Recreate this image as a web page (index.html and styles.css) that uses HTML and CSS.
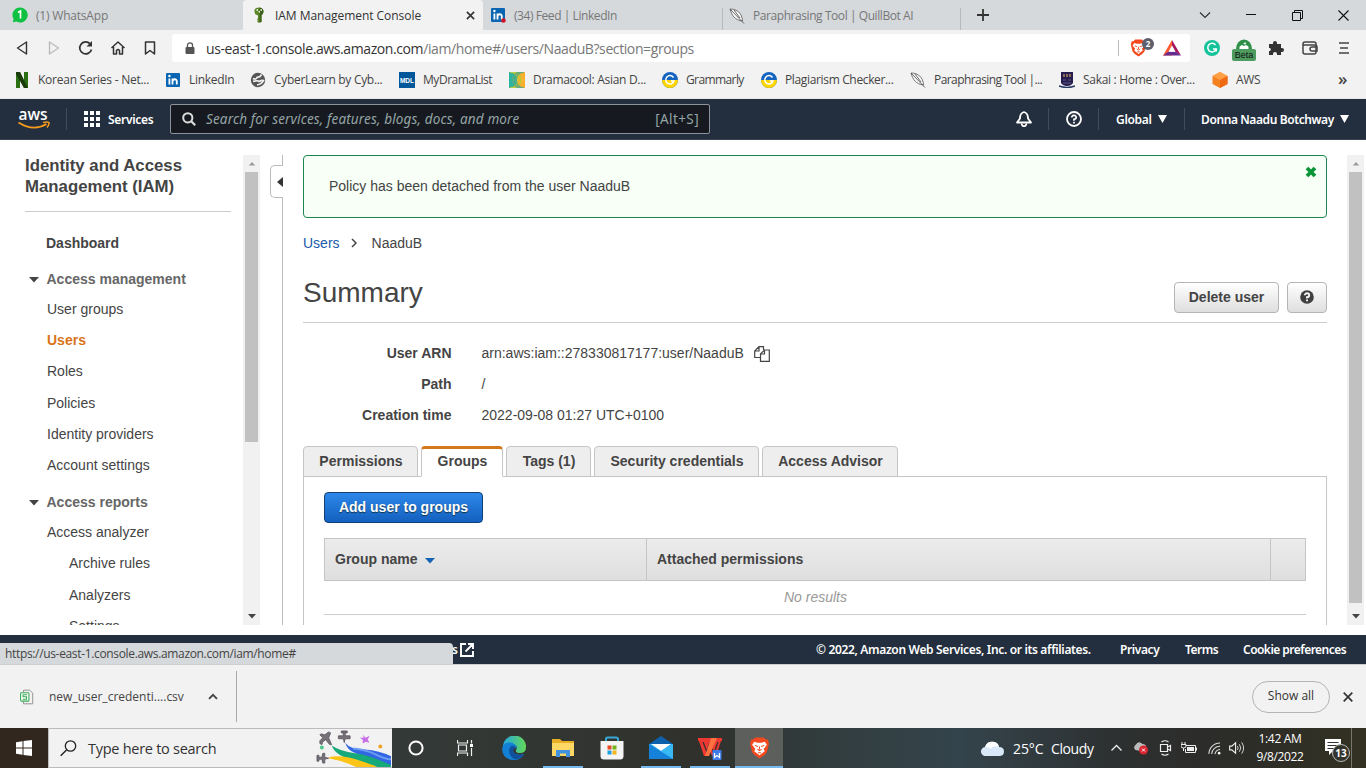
FILE: index.html
```
<!DOCTYPE html>
<html lang="en">
<head>
<meta charset="utf-8">
<title>IAM Management Console</title>
<link rel="stylesheet" href="styles.css">
</head>
<body>
<svg class="defs" width="0" height="0">
  <symbol id="quill" viewBox="0 0 16 16"><path d="M1 1C8 1 13 5 13.500 13C6 12 3 8 1 1Z" fill="#fafafa" stroke="#666" stroke-width=".9"/><path d="M1 1L15 15.500M5 2L11 10" fill="none" stroke="#555" stroke-width=".9"/></symbol>
  <symbol id="grammarly" viewBox="0 0 16 16"><circle cx="8" cy="8" r="8" fill="#1565c0"/><path d="M0 8a8 8 0 0 0 16 0z" fill="#ffd600"/><path d="M11.500 5.500A4.200 4.200 0 1 0 12 9H9" fill="none" stroke="#fff" stroke-width="1.500"/></symbol>
  <symbol id="linkedin" viewBox="0 0 16 16"><rect x="1" y="1" width="14" height="14" rx="1" fill="#0a66b2"/><path d="M4.400 6.500V12.500M7.500 12.500V6.500M7.500 9.500C7.500 6.800 11.800 6.300 11.800 9.300V12.500" fill="none" stroke="#fff" stroke-width="1.800"/><circle cx="4.400" cy="4" r="1.200" fill="#fff"/></symbol>
  <symbol id="brave" viewBox="0 0 20 22"><path d="M6 1H14L16 3L18 3L19 7L17 15Q15 18 10 21Q5 18 3 15L1 7L2 3L4 3Z" fill="#f4481e"/><path d="M5 5L8 6H12L15 5L17 8L14 12L15 14L10 18L5 14L6 12L3 8Z" fill="#fff"/><path d="M5.500 8.500L8.500 9.500M14.500 8.500L11.500 9.500M10 9.500V12.500M8 12L10 13.500L12 12M8.500 15.500H11.500" fill="none" stroke="#f4481e" stroke-width="1"/></symbol>
  <symbol id="up" viewBox="0 0 10 6"><path d="M1 5.500L5 1L9 5.500Z"/></symbol>
  <symbol id="down" viewBox="0 0 10 6"><path d="M0 0H10L5 5.500Z"/></symbol>
</svg>

<div class="tabstrip">
  <div class="tab tab-first"><svg class="fav" viewBox="0 0 16 16"><path d="M8 0.500A7.500 7.500 0 1 1 4.500 14.500L0.800 15.200L1.600 12A7.500 7.500 0 0 1 8 0.500Z" fill="#0fc143"/><path d="M6 5.500L8.500 4V11.500" fill="none" stroke="#fff" stroke-width="1.600"/></svg><span class="t-wa">(1) WhatsApp</span></div>
  <div class="tab tab-active"><svg class="fav" viewBox="0 0 16 16"><path d="M8 0.500A4.500 4 0 0 1 12.500 4.500A4 4 0 0 1 10.500 8V15L7.500 15.800L6 14.500L7 13.500L6 12.500L7 11V8.500L4 7L3.300 3L5 1Z" fill="#5c8727"/><path d="M8.500 .5V15.500L10.500 15V8A4 4 0 0 0 12.500 4.500A4.500 4 0 0 0 8.500 .5Z" fill="#3c611b"/><path d="M5.500 3H7M9.500 3H11M8.300 4V5.500" stroke="#fff" stroke-width="1.300"/></svg><span class="t-iam">IAM Management Console</span><svg class="tab-x" viewBox="0 0 10 10"><path d="M1 1L9 9M9 1L1 9" stroke="#333" stroke-width="1.800"/></svg></div>
  <div class="tab tab-li"><svg class="fav" viewBox="0 0 16 16"><use href="#linkedin"/><circle cx="13.500" cy="13.500" r="2.200" fill="#d11124"/></svg><span class="t-feed">(34) Feed | LinkedIn</span></div>
  <div class="tab tab-quill"><svg class="fav"><use href="#quill"/></svg><span class="t-quill">Paraphrasing Tool | QuillBot AI</span></div>
  <svg class="newtab" viewBox="0 0 12 12"><path d="M6 0V12M0 6H12" stroke="#333" stroke-width="1.800"/></svg>
  <div class="winctl">
    <svg width="12" height="8" viewBox="0 0 12 8"><path d="M1 1.500L6 6.500L11 1.500" fill="none" stroke="#333" stroke-width="1.200"/></svg>
    <svg width="10" height="10" viewBox="0 0 10 10"><path d="M0 4.500H10" stroke="#111"/></svg>
    <svg width="11" height="11" viewBox="0 0 11 11"><path d="M.5 2.500H8.500V10.500H.5ZM2.500 2.500V.5H10.500V8.500H8.500" fill="none" stroke="#111"/></svg>
    <svg width="11" height="11" viewBox="0 0 11 11"><path d="M.5 .5L10.500 10.500M10.500 .5L.5 10.500" stroke="#111" stroke-width="1.100"/></svg>
  </div>
</div>

<div class="toolbar">
  <div class="nav">
    <svg viewBox="0 0 16 16"><path d="M12.500 2V14L3.500 8Z" fill="none" stroke="#333" stroke-width="1.400" stroke-linejoin="round"/></svg>
    <svg viewBox="0 0 16 16"><path d="M3.500 2V14L12.500 8Z" fill="none" stroke="#bcbcbc" stroke-width="1.400" stroke-linejoin="round"/></svg>
    <svg viewBox="0 0 16 16"><path d="M13.500 9.500A6 6 0 1 1 12 3.700" fill="none" stroke="#333" stroke-width="1.700"/><path d="M14 1V6.500H8.500Z" fill="#333"/></svg>
    <svg viewBox="0 0 16 16"><path d="M1.500 8L8 2L14.500 8M3.500 7V14H6.500V10.500Q8 8.500 9.500 10.500V14H12.500V7" fill="none" stroke="#333" stroke-width="1.500" stroke-linejoin="round"/></svg>
    <svg viewBox="0 0 16 16"><path d="M3.500 2H12.500V14L8 10.500L3.500 14Z" fill="none" stroke="#333" stroke-width="1.500" stroke-linejoin="round"/></svg>
  </div>
  <div class="address">
    <svg class="lock" viewBox="0 0 10 12"><rect x=".5" y="5" width="9" height="7" rx="1" fill="#555"/><path d="M2.500 5V3A2.500 2.200 0 0 1 7.500 3V5" fill="none" stroke="#555" stroke-width="1.300"/></svg>
    <span class="url">us-east-1.console.aws.amazon.com<span class="path">/iam/home#/users/NaaduB?section=groups</span></span>
    <span class="addr-sep"></span>
    <span class="shield"><svg width="17" height="20"><use href="#brave"/></svg><b>2</b></span>
    <svg class="bat" viewBox="0 0 18 16"><path d="M9 0L0 15.500H9L6 12L9 6Z" fill="#ff5a30"/><path d="M9 0L18 15.500L12.500 12L9 6Z" fill="#a3195b"/><path d="M0 15.500H18L12.500 11.500H5.500Z" fill="#662d91"/><path d="M9 5.500L12.500 11.800H5.500Z" fill="#fff"/></svg>
  </div>
  <div class="exts">
    <svg viewBox="0 0 16 16"><circle cx="8" cy="8" r="8" fill="#15c39a"/><path d="M11.500 5A4.300 4.300 0 1 0 12.200 9H9M12.200 9V11.500" fill="none" stroke="#fff" stroke-width="1.500"/></svg>
    <span class="beta"><svg viewBox="0 0 16 10"><path d="M0 10A8 9.500 0 0 1 16 10Z" fill="#2f8f46"/><path d="M3.500 10V7.500L6 6L8 7L10 6L12.500 7.500V10ZM7 5L9.500 3L10 5.500Z" fill="#fff"/></svg><i>Beta</i></span>
    <svg viewBox="0 0 16 16"><path d="M1 4H5V3A2 2 0 0 1 9 3V4H13V8H14A2 2 0 0 1 14 12H13V15H9V14A2 2 0 0 0 5 14V15H1V11H2A2 2 0 0 0 2 8H1Z" fill="#333"/></svg>
    <svg viewBox="0 0 16 16"><rect x="1" y="2" width="13" height="12" rx="2" fill="none" stroke="#444" stroke-width="1.500"/><path d="M1 5H12Q15 5 15 7V11H10A2 2 0 0 1 10 7H15" fill="none" stroke="#444" stroke-width="1.500"/></svg>
    <svg viewBox="0 0 16 16"><path d="M3 3H13M4 8H12M3 13H13" stroke="#444" stroke-width="1.500"/></svg>
  </div>
</div>

<div class="bookmarks">
  <div class="bm w151"><svg viewBox="0 0 16 16"><path d="M2 0H6L10 9V0H14V16H10L6 8V16H2Z" fill="#2c7014"/><path d="M2 0H6L14 16H10L2 2Z" fill="#1a3b0c"/></svg><span class="b0">Korean Series - Net...</span></div>
  <div class="bm w85"><svg><use href="#linkedin"/></svg><span class="b1">LinkedIn</span></div>
  <div class="bm w149"><svg viewBox="0 0 16 16"><circle cx="8" cy="8" r="7.200" fill="#555"/><path d="M3 6.500Q6 8 7 5.500L10 4.500L11.500 2.500M3 9.500Q8 8 9 9.500Q12 8 13.500 8.500Q12 12 7 13" fill="none" stroke="#f2f2f2" stroke-width="1.700"/></svg><span class="b2">CyberLearn by Cyb...</span></div>
  <div class="bm w110"><svg viewBox="0 0 16 16"><rect width="16" height="16" fill="#00589b"/><text x="8" y="10.500" text-anchor="middle" class="mdl">MDL</text></svg><span class="b3">MyDramaList</span></div>
  <div class="bm w153"><svg viewBox="0 0 16 16"><rect width="8" height="16" fill="#2bb4a0"/><rect x="8" width="8" height="16" fill="#fbaf2c"/><path d="M1 0A8 8 0 0 1 1 16M4 0A8 8 0 0 1 4 16" fill="none" stroke="#bcc93d" stroke-width="1.500"/><path d="M15 0A8 8 0 0 0 15 16M12 0A8 8 0 0 0 12 16" fill="none" stroke="#68aa79" stroke-width="1.500"/></svg><span class="b4">Dramacool: Asian D...</span></div>
  <div class="bm w99"><svg><use href="#grammarly"/></svg><span class="b5">Grammarly</span></div>
  <div class="bm w149"><svg><use href="#grammarly"/></svg><span class="b6">Plagiarism Checker...</span></div>
  <div class="bm w149"><svg><use href="#quill"/></svg><span class="b7">Paraphrasing Tool |...</span></div>
  <div class="bm w153"><svg viewBox="0 0 16 16"><path d="M2 0H14V11Q12 14 8 14Q4 14 2 11Z" fill="#271c4e"/><path d="M4 2H6V5H4ZM7 2H9V5H7ZM10 2H12V5H10Z" fill="#8a6f58"/><path d="M4 8H7M9 8H12M4 11H12" stroke="#5c5a86"/><path d="M0 14Q8 17 16 14" fill="none" stroke="#273a62" stroke-width="1.500"/></svg><span class="b8">Sakai : Home : Over...</span></div>
  <div class="bm w85"><svg viewBox="0 0 16 16"><path d="M8 0L15.500 4V12L8 16L.5 12V4Z" fill="#f58220"/><path d="M8 0L15.500 4L8 8L.5 4Z" fill="#ffa047"/><path d="M8 8L15.500 4V12L8 16Z" fill="#ee6a13"/></svg><span class="b9">AWS</span></div>
  <span class="more">»</span>
</div>

<header class="aws">
  <svg class="awslogo" viewBox="0 0 32 28"><text x="0" y="15" textLength="29" class="awstext">aws</text><path d="M0 17.500Q15 27 28 19" fill="none" stroke="#f79a1c" stroke-width="1.900"/><path d="M24.500 17.500Q29 16.500 30.500 17.500Q31 19.500 28.500 22.500" fill="none" stroke="#f79a1c" stroke-width="1.500"/></svg>
  <span class="hsep"></span>
  <svg class="grid" viewBox="0 0 16 16"><path d="M0 0H4V4H0ZM6 0H10V4H6ZM12 0H16V4H12ZM0 6H4V10H0ZM6 6H10V10H6ZM12 6H16V10H12ZM0 12H4V16H0ZM6 12H10V16H6ZM12 12H16V16H12Z" fill="#fff"/></svg>
  <span class="services">Services</span>
  <div class="search"><svg viewBox="0 0 14 14"><circle cx="5.800" cy="5.800" r="4.600" fill="none" stroke="#ddd" stroke-width="2"/><path d="M9 9L13.200 13.200" stroke="#ddd" stroke-width="2.200"/></svg><em>Search for services, features, blogs, docs, and more</em><span class="alts">[Alt+S]</span></div>
  <div class="aws-right">
    <span class="h-item bell"><svg viewBox="0 0 16 16"><path d="M8 1Q12 2 12 7.500L15 11.500H1L4 7.500Q4 2 8 1Z" fill="none" stroke="#fff" stroke-width="1.800" stroke-linejoin="round"/><path d="M5.500 12.500Q6 15.200 8 15.200Q10 15.200 10.500 12.500" fill="none" stroke="#fff" stroke-width="1.600"/></svg></span>
    <span class="h-item help"><svg viewBox="0 0 16 16"><circle cx="8" cy="8" r="7" fill="none" stroke="#fff" stroke-width="1.800"/><path d="M5.800 6.500A2.200 2 0 1 1 8 8.300V9.800M8 10.800V12.500" fill="none" stroke="#fff" stroke-width="1.700"/></svg></span>
    <span class="h-item global"><span>Global</span><svg class="tri" viewBox="0 0 9 8"><path d="M0 0H9L4.500 8Z"/></svg></span>
    <span class="h-item user"><span>Donna Naadu Botchway</span><svg class="tri" viewBox="0 0 9 8"><path d="M0 0H9L4.500 8Z"/></svg></span>
  </div>
</header>

<div class="console">
  <aside class="side">
    <h2>Identity and Access<br>Management (IAM)</h2>
    <ul>
      <li class="dash">Dashboard</li>
      <li class="sec"><svg><use href="#down"/></svg>Access management</li>
      <li class="first">User groups</li>
      <li class="on">Users</li>
      <li>Roles</li>
      <li>Policies</li>
      <li>Identity providers</li>
      <li>Account settings</li>
      <li class="sec sec2"><svg><use href="#down"/></svg>Access reports</li>
      <li class="first">Access analyzer</li>
      <li class="sub">Archive rules</li>
      <li class="sub">Analyzers</li>
      <li class="sub">Settings</li>
    </ul>
  </aside>
  <div class="scroll"><svg class="su"><use href="#up"/></svg><div class="thumb thumb-a"></div><svg class="sd"><use href="#down"/></svg></div>
  <div class="divider"><div class="toggle"><svg viewBox="0 0 6 10"><path d="M6 0V10L0 5Z" fill="#333"/></svg></div></div>
  <main>
    <div class="alert"><span>Policy has been detached from the user NaaduB</span><svg viewBox="0 0 12 12"><path d="M2 2L10 10M10 2L2 10" stroke="#0b9537" stroke-width="3.800"/></svg></div>
    <div class="crumbs"><a>Users</a><svg viewBox="0 0 6 10"><path d="M1 1L5 5L1 9" fill="none" stroke="#444" stroke-width="1.500"/></svg><span>NaaduB</span></div>
    <div class="titlebar"><h1>Summary</h1><button class="btn del">Delete user</button><button class="btn q"><svg viewBox="0 0 14 14"><circle cx="7" cy="7" r="6.800" fill="#3f3f3f"/><path d="M4.800 5.300A2.200 2 0 1 1 7 7.300V8.500M7 9.500V11.300" fill="none" stroke="#f4f4f4" stroke-width="1.900"/></svg></button></div>
    <dl>
      <dt>User ARN</dt><dd>arn:aws:iam::278330817177:user/NaaduB<svg viewBox="0 0 16 16"><path d="M6.500 11.500H.7V5L5 .7H9.500V4M5 .7V5H.7M6.500 8L10.500 4H15.300V15.300H6.500ZM10.500 4V8H6.500" fill="none" stroke="#444" stroke-width="1.200"/></svg></dd>
      <dt>Path</dt><dd>/</dd>
      <dt>Creation time</dt><dd>2022-09-08 01:27 UTC+0100</dd>
    </dl>
    <div class="tabs"><span class="tp">Permissions</span><span class="tg">Groups</span><span class="tt">Tags (1)</span><span class="ts">Security credentials</span><span class="ta">Access Advisor</span></div>
    <section class="panel">
      <button class="primary">Add user to groups</button>
      <div class="thead"><div class="c1">Group name<svg><use href="#down"/></svg></div><div class="c2">Attached permissions</div><div class="c3"></div></div>
      <div class="empty">No results</div>
    </section>
  </main>
  <div class="scroll"><svg class="su"><use href="#up"/></svg><div class="thumb thumb-b"></div><svg class="sd"><use href="#down"/></svg></div>
</div>

<footer class="foot">
  <span class="fs">s</span><svg class="ext" viewBox="0 0 14 14"><path d="M6 1H1V13H13V8M8 1H13V6M13 1L5.500 8.500" fill="none" stroke="#fff" stroke-width="1.900"/></svg>
  <div class="flinks"><span class="f1">© 2022, Amazon Web Services, Inc. or its affiliates.</span><span class="f2">Privacy</span><span class="f3">Terms</span><span class="f4">Cookie preferences</span></div>
  <div class="status"><span>https://us-east-1.console.aws.amazon.com/iam/home#</span></div>
</footer>

<div class="downloads">
  <div class="dl"><svg class="csv" viewBox="0 0 16 17"><path d="M4 3V.7H11L14.500 4V16.300H4V14" fill="none" stroke="#888"/><rect x=".7" y="3.700" width="9.500" height="9.500" rx="1" fill="#fff" stroke="#35a853" stroke-width="1.200"/><path d="M8 6H3.500V8.300H7.500V11H3" fill="none" stroke="#35a853" stroke-width="1.200"/></svg><span class="dname">new_user_credenti....csv</span><svg class="chev" viewBox="0 0 10 7"><path d="M1 5.800L5 1.800L9 5.800" fill="none" stroke="#444" stroke-width="1.900"/></svg></div>
  <button class="showall"><span>Show all</span></button>
  <svg class="dx" viewBox="0 0 10 10"><path d="M.7 .7L9.300 9.300M9.300 .7L.7 9.300" stroke="#333" stroke-width="1.700"/></svg>
</div>

<div class="taskbar">
  <div class="start"><svg viewBox="0 0 16 16"><path d="M0 2.200L6.500 1.200V7.500H0ZM7.500 1L16 0V7.500H7.500ZM0 8.500H6.500V14.800L0 13.800ZM7.500 8.500H16V16L7.500 15Z" fill="#fff"/></svg></div>
  <div class="tsearch"><svg class="mag" viewBox="0 0 17 17"><circle cx="10.500" cy="6" r="5.200" fill="none" stroke="#222" stroke-width="1.300"/><path d="M6.500 10L.7 15.800" stroke="#222" stroke-width="1.400"/></svg><span>Type here to search</span>
    <svg class="planes" viewBox="0 0 76 39"><path d="M29 14Q34 21 49 21Q64 22 76 28V39H64Q50 29 38 24Q31 21 29 14Z" fill="#3267e3"/><path d="M37 20Q50 21 60 26T76 31" fill="none" stroke="#6d9cf5" stroke-width="2"/><path d="M15 17Q24 23 39 25T76 37V39H56Q40 34 28 29Q18 25 15 17Z" fill="#16a979"/><path d="M12 29Q25 26 43 32T62 39H40Q28 33 12 30Z" fill="#fbc417"/><g fill="#77717a" stroke="#56515a" stroke-width=".8"><path d="M4 5L8 6L12 3L14 4L12 9L15 16L13 16L9 11L6 13L5 16L3 15L3 12L6 9L3 6Z"/><path d="M25 2H31V4H29V7H34V10H29L28 14L27 10H22V7H27V4H25Z"/><path d="M0 27H2V29H5L6 25H8V29L12 30L8 31V35H6L5 31H2V33H0Z"/></g><path d="M47 6L50 9L54 7L52 11L54 14L50 13L47 15L47 11L44 9L48 9Z" fill="#c86ee6"/><circle cx="65" cy="18" r="2" fill="#eea324"/><circle cx="5" cy="19" r="2" fill="#4dc78b"/></svg>
  </div>
  <div class="apps">
    <div class="app"><svg width="16" height="16" viewBox="0 0 16 16"><circle cx="8" cy="8" r="6.600" fill="none" stroke="#fff" stroke-width="2"/></svg></div>
    <div class="app"><svg width="16" height="16" viewBox="0 0 16 16"><path d="M.5 0V3H10.500V0M.5 16V13H10.500V16M1.500 5H9.500V11H1.500ZM14.500 0V3.500M14.500 8V16" fill="none" stroke="#eee" stroke-width="1.200"/><rect x="13" y="4" width="3" height="3" fill="#fff"/></svg></div>
    <div class="app"><svg width="24" height="24" viewBox="0 0 24 24"><defs><linearGradient id="eg" x1="0" x2="1" y1="0" y2="0"><stop offset="0" stop-color="#24a8df"/><stop offset="1" stop-color="#63d956"/></linearGradient></defs><path d="M1 11A11.500 11.500 0 0 1 24 11Q24 17 18 17Q13 17 14 14Q16 11 13 9Q8 6 1 11Z" fill="url(#eg)"/><path d="M0 13Q1 6 8 6.500Q14 7 14.500 12Q9 12 12 17Q15 20 22 18Q19 24 12 24Q1 24 0 13Z" fill="#1281d5"/><path d="M9 10Q4 17 12 23Q19 24 22 18Q15 21 11.500 16Q10 13 14 12Q12 9 9 10Z" fill="#10509c"/></svg></div>
    <div class="app run"><svg width="22" height="20" viewBox="0 0 22 20"><path d="M0 1H8L10 3H22V18H0Z" fill="#e9ae28"/><rect y="5" width="22" height="13" fill="#ffd765"/><path d="M4 19V12H18V19H14V15.500H8V19Z" fill="#4193df"/></svg></div>
    <div class="app"><svg width="24" height="24" viewBox="0 0 24 24"><path d="M6 7V3Q6 1.500 7.500 1.500H16Q18 1.500 18 3V7" fill="none" stroke="#38a7d6" stroke-width="2"/><path d="M0.500 5H23.500V20Q23.500 23.500 20 23.500H4Q.5 23.500 .5 20Z" fill="#f4f4f4"/><path d="M7.500 9.500H11.500V13.500H7.500Z" fill="#e94a27"/><path d="M12.500 9.500H16.500V13.500H12.500Z" fill="#73b51e"/><path d="M7.500 14.500H11.500V18.500H7.500Z" fill="#1f9fe4"/><path d="M12.500 14.500H16.500V18.500H12.500Z" fill="#f5b41c"/></svg></div>
    <div class="app run"><svg width="24" height="24" viewBox="0 0 24 24"><path d="M0 8L12 0L24 8V12H0Z" fill="#0d60ac"/><path d="M0 8H24V23H0Z" fill="#2aa7ed"/><path d="M2 8H22L12 15Z" fill="#fff"/><path d="M0 8L12 15L24 8V23H0Z" fill="#39b9f4"/><path d="M0 8L24 23H0Z" fill="#1681d8"/></svg></div>
    <div class="app run"><svg width="24" height="24" viewBox="0 0 24 24"><path d="M0 2H24V5H23L18 20H14L12 15L10 20H6L1 5H0Z" fill="#ef3831"/><path d="M5 6L9 16L12 6M14 13L16 17L20 6" fill="none" stroke="#383431" stroke-width="1.300"/><path d="M13 2H19L11 20H7Z" fill="#ff7140"/><rect x="14.500" y="14" width="9" height="10" rx="1" fill="#3e7de8"/><path d="M16.500 17V21.500L19 19.500L21.500 21.500V17" fill="none" stroke="#fff" stroke-width="1.300"/></svg></div>
    <div class="app run active"><svg width="21" height="24"><use href="#brave"/></svg></div>
  </div>
  <div class="tray">
    <svg class="cloud" viewBox="0 0 23 15"><path d="M5 15A4.500 4.500 0 0 1 4 6Q6 0 12 .7Q17 1 18 6Q23 6 23 10.500Q23 15 18 15Z" fill="#d9e9fa"/><path d="M4 6Q6 0 12 .7Q17 1 18 6Q12 4 9 8Q7 5 4 6Z" fill="#fff"/></svg>
    <span class="temp">25°C</span><span class="cond">Cloudy</span>
    <svg class="s-up" viewBox="0 0 12 8"><path d="M1 6.500L6 1.500L11 6.500" fill="none" stroke="#eee" stroke-width="1.300"/></svg>
    <svg class="s-od" viewBox="0 0 16 14"><path d="M3 9A3 3 0 0 1 3 4Q6-1 10 3Q14 3 14 8L8 10Z" fill="#bbb"/><circle cx="11" cy="9" r="4.500" fill="#d92532"/><path d="M9.500 7.500L12.500 10.500M12.500 7.500L9.500 10.500" stroke="#fff"/></svg>
    <svg class="s-cam" viewBox="0 0 12 16"><path d="M1 4.500H8V11.500H1ZM8 7L11 5.500V10.500L8 9M2 2Q5.500 -.5 9 2M2 14Q5.500 16.500 9 14" fill="none" stroke="#eee" stroke-width="1.200"/></svg>
    <svg class="s-bt" viewBox="0 0 16 12"><path d="M5 3.500H14.500V10.500H4.500V7M15.500 5.500V8.500M1 0V2M4 0V2M0 2.500H5V4Q5 6 2.500 6Q0 6 0 4ZM2.500 6V9" fill="none" stroke="#eee"/><rect x="6" y="5" width="7" height="4" fill="#eee"/></svg>
    <svg class="s-wf" viewBox="0 0 14 14"><path d="M1 13A12 12 0 0 1 13 1M4 13A9 9 0 0 1 13 4.500M7.500 13A6 6 0 0 1 13 8" fill="none" stroke="#ddd" stroke-width="1.100"/><circle cx="12" cy="12" r="1.400" fill="#fff"/></svg>
    <svg class="s-sn" viewBox="0 0 17 14"><path d="M.7 5H3L7 1.500V12.500L3 9H.7Z" fill="none" stroke="#eee" stroke-width="1.200"/><path d="M9 5Q10.500 7 9 9M11 3Q14 7 11 11M13.500 1Q17.500 7 13.500 13" fill="none" stroke="#ddd"/></svg>
    <div class="clock"><span class="ck1">1:42 AM</span><span class="ck2">9/8/2022</span></div>
    <div class="notif"><svg viewBox="0 0 16 16"><path d="M0 0H16V12H8L4 16V12H0Z" fill="#fff"/><path d="M2.500 3.500H13.500M2.500 6.500H13.500M2.500 9.500H9" stroke="#333" stroke-width="1.200"/></svg><b>13</b></div>
    <span class="peek"></span>
  </div>
</div>
</body>
</html>
```
FILE: styles.css
```
* { box-sizing: border-box; }
body { margin: 0; width: 1366px; height: 768px; overflow: hidden; background: #fff; font-family: "Liberation Sans", Arial, sans-serif; font-size: 14px; color: #444; display: flex; flex-direction: column; }
body > * { flex: none; }
svg { display: block; flex: none; }
span, em { white-space: nowrap; }
button { font-family: inherit; padding: 0; }
.defs { position: absolute; }

.tabstrip, .toolbar, .bookmarks, .downloads, .taskbar, .status { font-family: "Open Sans", "Noto Sans", sans-serif; }

.tabstrip { height: 30px; background: #d5d9dc; display: flex; align-items: center; font-size: 12px; letter-spacing: -0.3px; color: #777; }
.tab { height: 30px; display: flex; align-items: center; gap: 8px; }
.fav { width: 16px; height: 16px; }
.tab-first { width: 243px; padding-left: 12px; }
.tab-active { width: 240px; padding-left: 8px; background: #f2f2f2; color: #333; border-radius: 4px 4px 0 0; }
.t-wa { letter-spacing: -0.2px; }
.t-iam { letter-spacing: -0.04px; }
.t-feed { letter-spacing: -0.43px; }
.t-quill { letter-spacing: -0.43px; }
.tab-x { width: 9px; height: 9px; margin-left: auto; margin-right: 8px; }
.tab-li { width: 239px; padding-left: 7px; }
.tab-quill { width: 239px; padding-left: 6px; border: solid #b5b9bc; border-width: 0 1px; height: 22px; align-self: flex-end; padding-bottom: 7px; }
.newtab { width: 12px; height: 12px; margin-left: 16px; }
.winctl { margin-left: auto; display: flex; align-items: center; justify-content: space-between; width: 150px; margin-right: 17px; }

.toolbar { height: 36px; background: #f2f2f2; display: flex; align-items: center; }
.nav { width: 172px; display: flex; gap: 16px; padding-left: 14px; }
.nav svg { width: 16px; height: 16px; }
.address { width: 1018px; height: 28px; background: #fff; border-radius: 3px; display: flex; align-items: center; padding-left: 13px; }
.lock { width: 10px; height: 12px; }
.url { margin-left: 11px; font-size: 14px; letter-spacing: -0.4px; color: #333; width: 912px; }
.path { color: #777; }
.addr-sep { width: 1px; height: 16px; background: #bbb; margin-right: 11px; }
.shield { width: 33px; position: relative; }
.shield b { position: absolute; left: 12px; top: 0; width: 12px; height: 12px; border-radius: 6px; background: #5d5f6d; color: #fff; font-size: 8px; line-height: 12px; text-align: center; }
.bat { width: 18px; height: 16px; }
.exts { display: flex; align-items: center; padding-left: 14px; gap: 16px; }
.exts > svg { width: 16px; height: 16px; }
.exts > svg:nth-child(4) { margin-left: 2px; }
.exts > svg:nth-child(5) { margin-left: 2px; }
.beta { width: 24px; height: 22px; margin: 4px -4px 0; display: flex; flex-direction: column; align-items: center; }
.beta svg { width: 16px; height: 10px; }
.beta i { font-style: normal; font-family: "Liberation Sans", sans-serif; font-size: 9px; line-height: 12px; width: 24px; height: 12px; background: #4d9b5f; color: #111; text-align: center; border-radius: 2px; }

.bookmarks { height: 33px; background: #f2f2f2; display: flex; padding-left: 14px; font-size: 12px; letter-spacing: -0.3px; color: #444; border-bottom: 1px solid #e6e8ea; }
.bm { display: flex; align-items: center; gap: 8px; height: 28px; }
.bm span { margin-top: -1px; }
.bm svg { width: 16px; height: 16px; }
.b0 { letter-spacing: -0.25px; }
.b3 { letter-spacing: -0.45px; }
.b5 { letter-spacing: -0.6px; }
.b6 { letter-spacing: -0.35px; }
.b7 { letter-spacing: -0.57px; }
.w151 { width: 151px; } .w85 { width: 85px; } .w149 { width: 149px; } .w110 { width: 110px; } .w153 { width: 153px; } .w99 { width: 99px; }
.mdl { font: bold 6.500px "Liberation Sans", sans-serif; fill: #fff; letter-spacing: 0; }
.more { margin-left: 41px; font-size: 17px; line-height: 25px; font-weight: 600; }

.aws { height: 41px; background: #232f3e; border-bottom: 1px solid #3b4653; display: flex; align-items: center; font: 600 12px "Noto Sans", sans-serif; color: #fff; padding-left: 18px; }
.awslogo { width: 33px; height: 28px; }
.awstext { font: 600 15.500px "Open Sans", sans-serif; fill: #fff; }
.hsep { width: 1px; height: 22px; margin: 0 17px 0 15px; background: #414d5c; }
.grid { width: 16px; height: 16px; }
.services { width: 69px; padding-left: 8px; margin-right: 1px; letter-spacing: -0.3px; }
.search { width: 540px; height: 30px; border: 1px solid #8b949c; border-radius: 2px; background: #16191f; display: flex; align-items: center; padding: 0 10px 0 11px; color: #95a5a6; font-weight: 400; font-size: 13.500px; }
.search svg { width: 14px; height: 14px; margin-right: 10px; }
.search em { letter-spacing: .15px; }
.alts { margin-left: auto; letter-spacing: .4px; }
.aws-right { margin-left: auto; display: flex; }
.h-item { height: 22px; display: flex; align-items: center; border-right: 1px solid #414d5c; gap: 6px; letter-spacing: -0.3px; }
.h-item svg { width: 16px; height: 16px; }
.h-item .tri { width: 9px; height: 8px; fill: #fff; }
.bell { width: 33px; }
.help { width: 50px; padding-left: 17px; }
.global { width: 86px; padding-left: 17px; }
.user { width: 181px; padding-left: 16px; border: 0; letter-spacing: -0.4px; }

.console { height: 495px; padding: 15px 2px 10px 0; display: flex; overflow: hidden; }
.side { width: 243px; padding: 0 12px 0 25px; height: 470px; overflow: hidden; }
.side h2 { margin: 0; font-size: 16.800px; line-height: 21px; height: 57px; border-bottom: 1px solid #ccc; white-space: nowrap; }
.side ul { list-style: none; margin: 0; padding: 15px 0 0 22px; }
.side li { height: 31.200px; line-height: 32px; white-space: nowrap; }
.side .dash { font-weight: bold; height: 36px; margin-left: -1px; }
.side .sec { font-weight: bold; color: #666; height: 30px; margin-left: -18px; display: flex; align-items: center; gap: 7.500px; padding-top: 1px; }
.side .sec svg { width: 10px; height: 6px; fill: #444; margin-top: 2px; }
.side .sec2 { margin-top: 6px; }
.side .on { font-weight: bold; color: #d9731a; }
.side .sub { padding-left: 22px; }
.scroll { width: 17px; height: 470px; background: #f1f1f1; display: flex; flex-direction: column; align-items: center; padding: 6px 0; flex: none; }
.su, .sd { width: 8px; height: 5px; fill: #999; }
.sd { margin-top: auto; fill: #444; }
.thumb { width: 13px; background: #c1c1c1; margin-top: 6px; }
.thumb-a { height: 270px; } .thumb-b { height: 431px; }
.divider { width: 23px; height: 470px; border-right: 1px solid #bbb; margin-right: 20px; padding-top: 10px; flex: none; }
.toggle { width: 13px; height: 33px; margin-left: 10px; background: #fff; border: 1px solid #bbb; border-right: 0; border-radius: 5px 0 0 5px; display: flex; align-items: center; justify-content: flex-end; box-shadow: 1px 0 #fff; }
.toggle svg { width: 6px; height: 10px; }

main { width: 1024px; margin-right: 20px; height: 470px; overflow: hidden; flex: none; }
.alert { height: 63px; border: 1px solid #1d8650; border-radius: 4px; background: #f7fff7; padding: 0 9px 0 25px; display: flex; align-items: center; justify-content: space-between; }
.alert span { margin-top: -2px; }
.alert svg { width: 12px; height: 12px; align-self: flex-start; margin-top: 10px; }
.crumbs { height: 50px; display: flex; align-items: center; }
.crumbs a { color: #1a5ba8; }
.crumbs svg { width: 6px; height: 10px; margin: 0 15px 0 11px; }
.titlebar { height: 55px; border-bottom: 1px solid #ccc; display: flex; align-items: center; }
h1 { font-size: 28px; font-weight: 400; line-height: 40px; margin: 0 auto 4px 0; }
.btn { height: 31px; margin-top: 5px; border: 1px solid #b5b5b5; border-radius: 4px; background: linear-gradient(#fff, #dedede); color: #444; font-size: 14px; font-weight: bold; }
.del { width: 105px; padding-bottom: 2px; }
.q { width: 40px; margin-left: 8px; display: flex; align-items: center; justify-content: center; }
.q svg { width: 14px; height: 14px; margin-top: -2px; }
dl { margin: 0; height: 123px; padding-top: 15px; display: grid; grid-template-columns: 148.500px 1fr; grid-auto-rows: 31px; column-gap: 30px; line-height: 31px; }
dt { font-weight: bold; text-align: right; }
dd { margin: 0; display: flex; align-items: center; }
dd svg { width: 16px; height: 16px; margin-left: 10px; margin-top: 1px; }
.tabs { display: flex; gap: 3px; font-weight: bold; height: 31px; }
.tabs span { height: 31px; border: 1px solid #c5c5c5; background: #eee; border-radius: 4px 4px 0 0; text-align: center; line-height: 29px; padding-left: 1px; }
.tabs .tg { width: 82px; background: #fff; border-top: 3px solid #d5781b; border-bottom-color: #fff; line-height: 25px; z-index: 1; }
.tp { width: 115px; } .tt { width: 85px; } .ts { width: 165px; } .ta { width: 136px; }
.panel { border: 1px solid #c5c5c5; margin-top: -1px; height: 160px; padding: 15px 20px; }
.primary { display: block; width: 159px; height: 31px; border: 1px solid #123e72; border-radius: 4px; background: linear-gradient(#2d88e8, #1360bf); color: #fff; font: bold 14px "Liberation Sans", sans-serif; text-shadow: 0 1px 1px #134; padding-bottom: 2px; }
.thead { display: flex; height: 43px; margin-top: 15px; border: 1px solid #c5c5c5; background: linear-gradient(#ececec, #dedede); line-height: 41px; font-weight: bold; }
.thead div { border-right: 1px solid #c5c5c5; padding-left: 10px; }
.thead .c1 { width: 322px; display: flex; align-items: center; gap: 8px; }
.thead svg { width: 10px; height: 6px; fill: #1663b5; margin-top: 2px; }
.thead .c2 { width: 624px; }
.thead .c3 { border: 0; }
.empty { height: 34px; border-bottom: 1px solid #ccc; text-align: center; line-height: 32px; font-style: italic; color: #999; padding-left: 1px; }

.foot { position: relative; height: 30px; background: #232f3e; border-bottom: 1px solid #cdd0d2; color: #fff; display: flex; align-items: center; padding-left: 452px; font: 600 12px "Noto Sans", sans-serif; }
.fs { width: 8px; }
.ext { width: 14px; height: 14px; }
.flinks { margin-left: auto; display: flex; }
.f1 { width: 304px; letter-spacing: -0.34px; } .f2 { width: 65px; letter-spacing: -0.4px; } .f3 { width: 58px; letter-spacing: -0.5px; } .f4 { width: 123px; letter-spacing: -0.53px; }
.status { position: absolute; left: 0; bottom: 0; width: 453px; height: 21px; background: #d5d9dc; border-radius: 0 4px 0 0; color: #444; font-size: 12px; font-weight: 400; line-height: 21px; padding-left: 5px; letter-spacing: -0.34px; }
.downloads { height: 63px; background: #f2f2f2; display: flex; align-items: center; font-size: 12px; color: #444; }
.dl { width: 237px; height: 51px; border-right: 1px solid #aaa; display: flex; align-items: center; padding-left: 20px; }
.csv { width: 14px; height: 16px; }
.dname { width: 174px; padding-left: 15px; }
.chev { width: 10px; height: 7px; }
.showall { margin-left: auto; width: 78px; height: 32px; border: 1px solid #b5b5b5; border-radius: 16px; background: #f2f2f2; color: #333; font-size: 12px; padding-bottom: 2px; }
.dx { width: 10px; height: 10px; margin: 0 13px; }

.taskbar { height: 40px; background: linear-gradient(90deg, #32271f 0, #32271f 48px, #343a38 392px, #30312c 700px, #313b3b 800px, #34444c 960px, #2d3030 1120px, #2c2c29 1230px, #333122 1366px); display: flex; color: #fff; }
.start { width: 48px; display: flex; align-items: center; justify-content: center; }
.start svg { width: 16px; height: 16px; }
.tsearch { width: 344px; background: #f2f2f2; border: 1px solid #bbb; border-right: 0; display: flex; align-items: center; color: #333; font-size: 14.500px; letter-spacing: -0.27px; padding-left: 11px; }
.mag { width: 17px; height: 17px; margin-right: 11px; }
.planes { width: 76px; height: 38px; margin-left: auto; }
.apps { display: flex; margin-left: -1px; }
.app { width: 49px; height: 40px; display: flex; align-items: center; justify-content: center; }
.run { background: linear-gradient(#76b9ed, #76b9ed) center bottom / 40px 2px no-repeat; }
.active { background: linear-gradient(#76b9ed, #76b9ed) center bottom / 48px 2px no-repeat, #5c5f5c; margin-left: 1px; width: 48px; }
.tray { margin-left: auto; width: 385px; display: flex; align-items: center; font-size: 14px; }
.cloud { width: 23px; height: 15px; }
.temp { width: 38px; margin-left: 9px; letter-spacing: -0.1px; }
.cond { width: 59px; letter-spacing: -0.4px; }
.s-up { width: 13px; height: 8px; margin-right: 9px; }
.s-od { width: 17px; height: 14px; margin-right: 10px; }
.s-cam { width: 13px; height: 16px; margin-right: 9px; }
.s-bt { width: 16px; height: 12px; margin-right: 11px; }
.s-wf { width: 13px; height: 13px; margin-right: 8px; }
.s-sn { width: 16px; height: 14px; }
.clock { width: 70px; font-size: 12px; line-height: 18px; letter-spacing: -0.3px; display: flex; flex-direction: column; align-items: center; }
.ck2 { letter-spacing: -0.35px; }
.notif { position: relative; width: 36px; padding-left: 10px; }
.notif svg { width: 16px; height: 16px; margin-top: -3px; }
.notif b { position: absolute; left: 17px; top: 2px; width: 18px; height: 18px; border: 1px solid #bbb; border-radius: 9px; background: #33342d; font-size: 10px; line-height: 16px; text-align: center; }
.peek { width: 1px; height: 40px; background: #77776e; }
```
